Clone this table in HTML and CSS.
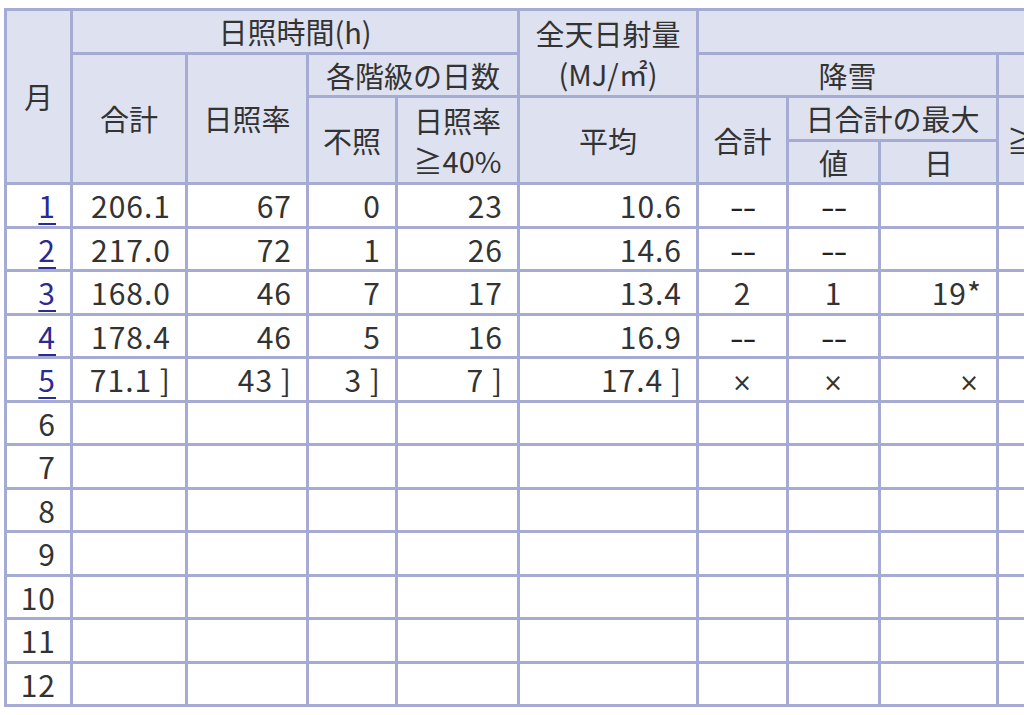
FILE: index.html
```html
<!DOCTYPE html>
<html lang="ja">
<head>
<meta charset="utf-8">
<title>日照・日射・雪</title>
<link rel="stylesheet" href="styles.css">
</head>
<body>
<table class="data">
  <colgroup>
    <col class="c-month">
    <col class="c-sum">
    <col class="c-rate">
    <col class="c-none">
    <col class="c-40">
    <col class="c-rad">
    <col class="c-snow">
    <col class="c-val">
    <col class="c-day">
    <col class="c-more">
  </colgroup>
  <thead>
    <tr>
      <th rowspan="4">月</th>
      <th colspan="4">日照時間(h)</th>
      <th rowspan="2">全天日射量<br>(MJ/㎡)</th>
      <th colspan="4"></th>
    </tr>
    <tr>
      <th rowspan="3">合計</th>
      <th rowspan="3">日照率</th>
      <th colspan="2">各階級の日数</th>
      <th colspan="3">降雪</th>
      <th></th>
    </tr>
    <tr>
      <th rowspan="2">不照</th>
      <th rowspan="2">日照率<br>≧40%</th>
      <th rowspan="2">平均</th>
      <th rowspan="2">合計</th>
      <th colspan="2">日合計の最大</th>
      <th rowspan="2" class="more">≧</th>
    </tr>
    <tr>
      <th>値</th>
      <th>日</th>
    </tr>
  </thead>
  <tbody>
    <tr><td><a href="#">1</a></td><td>206.1</td><td>67</td><td>0</td><td>23</td><td>10.6</td><td class="c"><span class="dash">--</span></td><td class="c"><span class="dash">--</span></td><td></td><td></td></tr>
    <tr><td><a href="#">2</a></td><td>217.0</td><td>72</td><td>1</td><td>26</td><td>14.6</td><td class="c"><span class="dash">--</span></td><td class="c"><span class="dash">--</span></td><td></td><td></td></tr>
    <tr><td><a href="#">3</a></td><td>168.0</td><td>46</td><td>7</td><td>17</td><td>13.4</td><td class="c">2</td><td class="c">1</td><td>19*</td><td></td></tr>
    <tr><td><a href="#">4</a></td><td>178.4</td><td>46</td><td>5</td><td>16</td><td>16.9</td><td class="c"><span class="dash">--</span></td><td class="c"><span class="dash">--</span></td><td></td><td></td></tr>
    <tr><td><a href="#">5</a></td><td>71.1 ]</td><td>43 ]</td><td>3 ]</td><td>7 ]</td><td>17.4 ]</td><td class="c"><span class="cross">×</span></td><td class="c"><span class="cross">×</span></td><td class="x"><span class="cross">×</span></td><td></td></tr>
    <tr><td>6</td><td></td><td></td><td></td><td></td><td></td><td></td><td></td><td></td><td></td></tr>
    <tr><td>7</td><td></td><td></td><td></td><td></td><td></td><td></td><td></td><td></td><td></td></tr>
    <tr><td>8</td><td></td><td></td><td></td><td></td><td></td><td></td><td></td><td></td><td></td></tr>
    <tr><td>9</td><td></td><td></td><td></td><td></td><td></td><td></td><td></td><td></td><td></td></tr>
    <tr><td>10</td><td></td><td></td><td></td><td></td><td></td><td></td><td></td><td></td><td></td></tr>
    <tr><td>11</td><td></td><td></td><td></td><td></td><td></td><td></td><td></td><td></td><td></td></tr>
    <tr><td>12</td><td></td><td></td><td></td><td></td><td></td><td></td><td></td><td></td><td></td></tr>
  </tbody>
</table>
</body>
</html>
```

FILE: styles.css
```css
html, body {
  margin: 0;
  padding: 0;
  background: #ffffff;
  overflow: hidden;
}

body {
  padding: 8px 0 0 4px;
  font-family: "Noto Sans CJK JP", "Noto Sans", sans-serif;
  color: #333333;
}

.data {
  border-collapse: collapse;
  table-layout: fixed;
  width: 1122px;
}

.c-month { width: 66px; }
.c-sum { width: 115px; }
.c-rate { width: 121px; }
.c-none { width: 89px; }
.c-40 { width: 122px; }
.c-rad { width: 179px; }
.c-snow { width: 90px; }
.c-val { width: 92px; }
.c-day { width: 118px; }
.c-more { width: 130px; }

.data th,
.data td {
  border: 3px solid #a5abd3;
  height: 40.5px;
  padding: 0;
  white-space: nowrap;
  overflow: hidden;
  vertical-align: middle;
}

.data th {
  background: #dee2f0;
  font-weight: normal;
  font-size: 29px;
  line-height: 40.5px;
  text-align: center;
}

.data th.more {
  text-align: left;
  padding-left: 8px;
}

.data td {
  background: #ffffff;
  font-size: 30px;
  line-height: 30px;
  letter-spacing: 1px;
  text-align: right;
  padding-right: 14px;
}

.data td.c {
  text-align: center;
  padding-right: 0;
}

.data td.x {
  padding-right: 16px;
}

.dash {
  display: inline-block;
  font-family: "DejaVu Sans", sans-serif;
  letter-spacing: -1px;
  font-size: 26px;
  line-height: 1;
  color: #222222;
  transform: scaleX(1.5);
}

.cross {
  font-family: "DejaVu Sans", sans-serif;
  font-size: 24px;
  line-height: 1;
}

.data a {
  color: #2a2a90;
  text-decoration: underline;
  text-decoration-thickness: 2px;
  text-underline-offset: 5px;
}
```
